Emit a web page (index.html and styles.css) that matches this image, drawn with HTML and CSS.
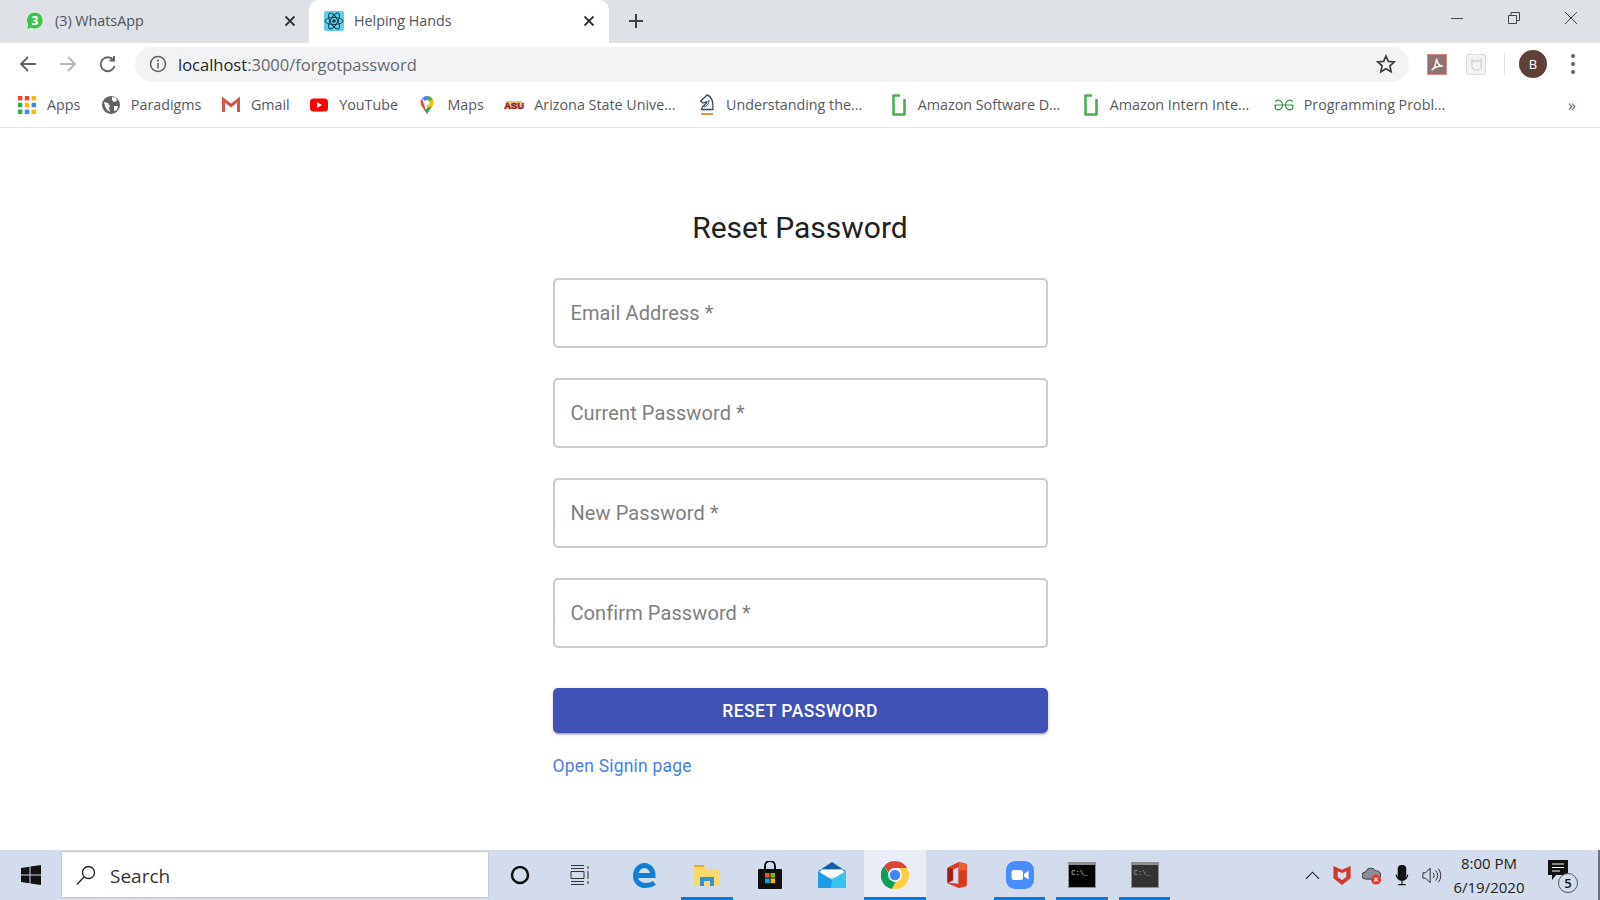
FILE: index.html
```html
<!DOCTYPE html>
<html lang="en">
  <head>
    <meta charset="UTF-8" />
    <title>Helping Hands</title>
    <link rel="stylesheet" href="styles.css">
  </head>
  <body>
    <!-- Tab strip -->
    <div class="tab-strip">
      <div class="tab">
        <svg class="favicon" viewBox="0 0 20 20"><path d="M10 1a8.600 8.600 0 0 0-7.400 13L1.500 18.500 6 17.400A8.600 8.600 0 1 0 10 1z" fill="#3fc251" stroke="#e4f5e6"/><text x="10" y="14" class="wa-count">3</text></svg>
        <span class="tab-title">(3) WhatsApp</span>
        <svg class="tab-close" viewBox="0 0 12 12"><path d="M1.500 1.500l9 9M10.500 1.500l-9 9"/></svg>
      </div>
      <div class="tab tab-active">
        <svg class="favicon" viewBox="0 0 20 20"><rect width="20" height="20" rx="2" fill="#61d0ec"/><g fill="none" stroke="#1d3d4c" stroke-width="1"><ellipse cx="10" cy="10" rx="9" ry="3.600"/><ellipse cx="10" cy="10" rx="9" ry="3.600" transform="rotate(60 10 10)"/><ellipse cx="10" cy="10" rx="9" ry="3.600" transform="rotate(120 10 10)"/></g><circle cx="10" cy="10" r="1.800" fill="#1d3d4c"/></svg>
        <span class="tab-title">Helping Hands</span>
        <svg class="tab-close" viewBox="0 0 12 12"><path d="M1.500 1.500l9 9M10.500 1.500l-9 9"/></svg>
      </div>
      <svg class="new-tab" viewBox="0 0 14 14"><path d="M7 0v14M0 7h14"/></svg>
      <div class="window-controls">
        <svg viewBox="0 0 12 12"><path d="M0 6.500h12"/></svg>
        <svg viewBox="0 0 12 12"><path d="M.5 3.500h8v8h-8zM3 3.500V.5h8.500v8h-3"/></svg>
        <svg viewBox="0 0 12 12"><path d="M0 0l12 12M12 0L0 12"/></svg>
      </div>
    </div>

    <!-- Address bar -->
    <div class="toolbar">
      <svg class="nav-icon" viewBox="0 0 18 18"><path d="M17 9H2M9 2L2 9l7 7"/></svg>
      <svg class="nav-icon nav-disabled" viewBox="0 0 18 18"><path d="M1 9h15M9 2l7 7-7 7"/></svg>
      <svg class="nav-icon" viewBox="0 0 18 18"><path d="M15.500 11a7 7 0 1 1-1.300-6.200M15 1v4.500h-4.500"/></svg>
      <div class="omnibox">
        <svg class="info-icon" viewBox="0 0 18 18"><circle cx="9" cy="9" r="7.500"/><path d="M9 8v5.500M9 4.500v2"/></svg>
        <span class="url"><span class="url-host">localhost</span>:3000/forgotpassword</span>
        <svg class="star-icon" viewBox="0 0 20 20"><path d="M10 2l2.400 5.400 5.800.6-4.300 3.900 1.200 5.800L10 14.700l-5.100 3 1.200-5.800L1.800 8l5.800-.6z"/></svg>
      </div>
      <div class="ext ext-pdf">
        <svg viewBox="0 0 20 20"><path d="M4 17c3-2 5-7 5.500-13 .5 5 3 8 7 8.500-5-.5-9 1-12.500 4.500z" fill="none" stroke="#fff" stroke-width="1.400"/></svg>
      </div>
      <div class="ext ext-pocket">
        <svg viewBox="0 0 14 14"><path d="M2 2l3 1.500h4L12 2v6a5 5 0 0 1-10 0z" fill="none" stroke="#cfd3d6" stroke-width="1.500"/></svg>
      </div>
      <div class="toolbar-divider"></div>
      <div class="avatar">B</div>
      <div class="kebab"><i></i><i></i><i></i></div>
    </div>

    <!-- Bookmarks -->
    <div class="bookmarks">
      <div class="bookmark bm-apps">
        <svg class="bm-icon" viewBox="0 0 18 18">
          <rect x="0" y="0" width="4.400" height="4.400" fill="#ea4335"/><rect x="6.800" y="0" width="4.400" height="4.400" fill="#ea4335"/><rect x="13.600" y="0" width="4.400" height="4.400" fill="#fbbc05"/>
          <rect x="0" y="6.800" width="4.400" height="4.400" fill="#34a853"/><rect x="6.800" y="6.800" width="4.400" height="4.400" fill="#fbbc05"/><rect x="13.600" y="6.800" width="4.400" height="4.400" fill="#4285f4"/>
          <rect x="0" y="13.600" width="4.400" height="4.400" fill="#34a853"/><rect x="6.800" y="13.600" width="4.400" height="4.400" fill="#4285f4"/><rect x="13.600" y="13.600" width="4.400" height="4.400" fill="#fbbc05"/>
        </svg>
        <span>Apps</span>
      </div>
      <div class="bookmark">
        <svg class="bm-icon" viewBox="0 0 18 18"><circle cx="9" cy="9" r="9" fill="#5f6368"/><path d="M2 6l4 1 2 3-1 2 1 4-3-2-2-4zM10 1l4 1 1 3-3 1-2-2zM12 10l4 0-1 4-3 1z" fill="#fff"/></svg>
        <span>Paradigms</span>
      </div>
      <div class="bookmark">
        <svg class="bm-icon" viewBox="0 0 18 18"><path d="M1.500 16V3.500L9 9.500l7.500-6V16" fill="none" stroke="#d0574d" stroke-width="3"/></svg>
        <span>Gmail</span>
      </div>
      <div class="bookmark">
        <svg class="bm-icon" viewBox="0 0 18 18"><rect y="2.500" width="18" height="13" rx="3.500" fill="#f00"/><path d="M7 6v6l5-3z" fill="#fff"/></svg>
        <span>YouTube</span>
      </div>
      <div class="bookmark">
        <svg class="bm-icon" viewBox="0 0 18 18"><path d="M9 0a6.500 6.500 0 0 1 6.500 6.500c0 1.300-.5 2.400-1.200 3.400L9 18z" fill="#fbbc04"/><path d="M9 0a6.500 6.500 0 0 0-5 2.400l5 4z" fill="#4285f4"/><path d="M9 0a6.500 6.500 0 0 1 5.600 3.200L9 6.500z" fill="#4caf50"/><path d="M4 2.400a6.500 6.500 0 0 0-.3 7.500L9 18z" fill="#ea4335"/><path d="M14.300 9.900L9 18 6.500 13.800z" fill="#34a853"/><circle cx="9" cy="6.500" r="2.500" fill="#fff"/></svg>
        <span>Maps</span>
      </div>
      <div class="bookmark bm-tight">
        <svg class="bm-icon bm-icon-wide" viewBox="0 0 20 12"><path d="M2 2h16v8H2z" fill="#f2c27a"/><text x="10" y="10" class="asu-logo">ASU</text></svg>
        <span>Arizona State Unive...</span>
      </div>
      <div class="bookmark bm-tight bm-understanding">
        <svg class="bm-icon bm-icon-knight" viewBox="0 0 18 22"><path d="M9 1c4 1 6.500 5 6 14.500H3.500c0-3.500 4.500-4.500 5.500-8L5 9 2.500 7 7 3z" fill="none" stroke="#33485f" stroke-width="1.300" stroke-linejoin="round"/><path d="M6 13c3-1 5-3 5-7" fill="none" stroke="#33485f"/><path d="M3 20h12" stroke="#e08a2b" stroke-width="1.800"/></svg>
        <span>Understanding the...</span>
      </div>
      <div class="bookmark bm-amazon-sd">
        <svg class="bm-icon bm-icon-narrow" viewBox="0 0 14 22"><path d="M8 1.500H1.500v19h11V5" fill="none" stroke="#4caf50" stroke-width="2.600" stroke-linejoin="round"/></svg>
        <span>Amazon Software D...</span>
      </div>
      <div class="bookmark bm-amazon-intern">
        <svg class="bm-icon bm-icon-narrow" viewBox="0 0 14 22"><path d="M8 1.500H1.500v19h11V5" fill="none" stroke="#4caf50" stroke-width="2.600" stroke-linejoin="round"/></svg>
        <span>Amazon Intern Inte...</span>
      </div>
      <div class="bookmark bm-tight bm-gfg">
        <svg class="bm-icon bm-icon-wide" viewBox="0 0 20 12"><path d="M18.800 2.600A4.300 4.800 0 1 0 18.800 9.400V6H1.200V9.400A4.300 4.800 0 1 0 1.200 2.600" fill="none" stroke="#2f8d46" stroke-width="1.200"/></svg>
        <span>Programming Probl...</span>
      </div>
      <span class="bm-more">»</span>
    </div>

    <!-- Page content -->
    <main class="page">
      <form class="reset-form">
        <h1>Reset Password</h1>
        <input class="field" type="text" placeholder="Email Address *" />
        <input class="field" type="text" placeholder="Current Password *" />
        <input class="field" type="text" placeholder="New Password *" />
        <input class="field" type="text" placeholder="Confirm Password *" />
        <button class="submit-btn" type="button">Reset Password</button>
        <a class="signin-link" href="#">Open Signin page</a>
      </form>
    </main>

    <!-- Windows taskbar -->
    <div class="taskbar">
      <div class="start-btn">
        <svg viewBox="0 0 20 20"><path d="M0 3l8.500-1.200v7.700H0zM9.500 1.600L20 0v9.500H9.500zM0 10.500h8.500v7.700L0 17zM9.500 10.500H20V20L9.500 18.400z" fill="#111"/></svg>
      </div>
      <div class="search-box">
        <svg viewBox="0 0 20 20"><circle cx="12.500" cy="7.500" r="6" fill="none" stroke="#222" stroke-width="1.300"/><path d="M8 12L1 19.500" stroke="#222" stroke-width="1.300"/></svg>
        <span>Search</span>
      </div>
      <div class="task-cell">
        <svg viewBox="0 0 20 20"><circle cx="10" cy="10" r="8" fill="none" stroke="#111" stroke-width="2.500"/></svg>
      </div>
      <div class="task-cell task-view">
        <svg viewBox="0 0 20 20"><path d="M1 .5h13M1 3.500h13M1 16.500h13M1 19.500h13M1 6.500h13v7H1zM18 1v3M18 6v8M18 16v3" fill="none" stroke="#333" stroke-width="1"/></svg>
      </div>
      <div class="task-cell">
        <svg class="task-icon" viewBox="0 0 26 28"><path d="M5 14.500h16c0-6-4-10-8.500-10C7.500 4.500 3.500 9 3.500 15c0 6.500 5 9.500 10.500 9.500 3 0 6-.8 8.500-2.500" fill="none" stroke="#0f7fd7" stroke-width="5"/></svg>
      </div>
      <div class="task-cell task-open">
        <svg class="task-icon" viewBox="0 0 26 24"><path d="M0 3a1 1 0 0 1 1-1h8l2 2H0z" fill="#e3a92a"/><path d="M0 4h11l2 2h13v17H0z" fill="#fbd96a"/><path d="M6 14h14v9h-4v-5h-6v5H6z" fill="#3a8fd0"/></svg>
      </div>
      <div class="task-cell">
        <svg class="task-icon" viewBox="0 0 26 28"><rect x="1" y="8" width="24" height="20" rx="1" fill="#111"/><path d="M8 10V5a5 5 0 0 1 10 0v5" fill="none" stroke="#111" stroke-width="2"/><rect x="8" y="12" width="4.600" height="4.600" fill="#f25022"/><rect x="13.500" y="12" width="4.600" height="4.600" fill="#7fba00"/><rect x="8" y="17.500" width="4.600" height="4.600" fill="#00a4ef"/><rect x="13.500" y="17.500" width="4.600" height="4.600" fill="#ffb900"/></svg>
      </div>
      <div class="task-cell">
        <svg class="task-icon task-icon-lg" viewBox="0 0 30 28"><path d="M0 10L15 0l15 10z" fill="#0f5ea8"/><path d="M3 8h24v8H3z" fill="#fff"/><path d="M0 10l15 9 15-9v18H0z" fill="#1d9be6"/><path d="M15 19l15-9v18H14z" fill="#36c3f2"/></svg>
      </div>
      <div class="task-cell task-active">
        <svg class="task-icon task-icon-lg" viewBox="0 0 28 28"><path d="M14 0a14 14 0 0 1 12.100 7H14a7 7 0 0 0-6.500 4.400L3.200 5A14 14 0 0 1 14 0z" fill="#db4437"/><path d="M3.200 5l6 10.500a6.500 6.500 0 0 0 5.500 5.500L11 28A14 14 0 0 1 3.200 5z" fill="#0f9d58"/><path d="M26.100 7A14 14 0 0 1 11 27.700L18 16a7 7 0 0 0 .5-9z" fill="#ffcd40"/><circle cx="14" cy="14" r="6.800" fill="#fff"/><circle cx="14" cy="14" r="5.300" fill="#4285f4"/></svg>
      </div>
      <div class="task-cell">
        <svg class="task-icon" viewBox="0 0 22 30"><path d="M1 7.500L13 1.500 21 3.500v23L13 28.500 1 23.500l12 1.500V6L6.500 8.500v12L1 23z" fill="#d8391f" stroke="#d8391f" stroke-linejoin="round"/><path d="M13 1.500l8 2V10h-8z" fill="#e8622a"/><path d="M1 7.500L6.500 8.500V20.500L1 23z" fill="#a31c1c"/></svg>
      </div>
      <div class="task-cell task-open">
        <svg class="task-icon task-icon-lg" viewBox="0 0 28 28"><rect width="28" height="28" rx="9" fill="#4a8cff"/><rect x="5.500" y="9" width="11.500" height="10" rx="2.500" fill="#fff"/><path d="M18 13l4.500-3.500v9L18 15.500z" fill="#fff"/></svg>
      </div>
      <div class="task-cell task-open">
        <div class="cmd-window"><span>C:\_</span></div>
      </div>
      <div class="task-cell task-open">
        <div class="cmd-window cmd-grey"><span>C:\_</span></div>
      </div>

      <div class="tray">
        <svg class="tray-icon" viewBox="0 0 16 16"><path d="M1 11.500L8 4.500l7 7" fill="none" stroke="#222" stroke-width="1.200"/></svg>
        <svg class="tray-icon tray-icon-lg" viewBox="0 0 20 22"><path d="M1 1l9 4 9-4v13l-9 7-9-7z" fill="#cf3a2f"/><path d="M5.500 6.500l4.500 2 4.500-2v6L10 16l-4.500-3.500z" fill="#d3dcec"/></svg>
        <svg class="tray-icon tray-icon-lg" viewBox="0 0 22 22"><path d="M4 15a4 4 0 0 1 0-8 6 6 0 0 1 11-1 4.500 4.500 0 0 1 2 9z" fill="#8c9096" stroke="#333"/><circle cx="15.500" cy="15.500" r="5.500" fill="#e03c31"/><path d="M13.500 13.500l4 4M17.500 13.500l-4 4" stroke="#fff" stroke-width="1.200"/></svg>
        <svg class="tray-icon tray-icon-lg" viewBox="0 0 14 22"><rect x="2.500" y="0" width="9" height="16" rx="4" fill="#111"/><path d="M1 10a6 6 0 0 0 12 0M7 16v4M3 20.500h8" fill="none" stroke="#111" stroke-width="1.200"/></svg>
        <svg class="tray-icon tray-icon-lg" viewBox="0 0 22 20"><path d="M1 7h3l5-5v16l-5-5H1zM12 7a4 4 0 0 1 0 6M15 4.500a8 8 0 0 1 0 11M18 2.500a12 12 0 0 1 0 15" fill="none" stroke="#333" stroke-width="1.100"/></svg>
      </div>
      <div class="clock">
        <div>8:00 PM</div>
        <div>6/19/2020</div>
      </div>
      <div class="notify">
        <svg viewBox="0 0 20 22"><path d="M0 0h20v15H8l-4 5v-5H0z" fill="#111"/><path d="M4 4h12M4 7.500h12M4 11h8" stroke="#fff" stroke-width="1.200"/></svg>
        <span class="notify-count">5</span>
      </div>
      <div class="show-desktop"></div>
    </div>
  </body>
</html>
```

FILE: styles.css
```css
/* General Styles */
* {
  box-sizing: border-box;
}
body {
  margin: 0;
  height: 900px;
  overflow: hidden;
  display: flex;
  flex-direction: column;
  background: #fff;
  font-family: "Open Sans", "Noto Sans", sans-serif;
  color: #3c4043;
}

/* Tab strip */
.tab-strip {
  height: 43px;
  flex: none;
  display: flex;
  align-items: center;
  background: #dee1e6;
}
.tab {
  width: 309px;
  height: 43px;
  flex: none;
  display: flex;
  align-items: center;
  padding: 0 13px 2px 25px;
}
.tab-active {
  width: 300px;
  padding: 0 14px 2px 15px;
  background: #fff;
  border-radius: 10px 10px 0 0;
  color: #45484c;
}
.favicon {
  width: 20px;
  height: 20px;
  flex: none;
}
.wa-count {
  font-size: 12px;
  font-weight: 700;
  fill: #fff;
  text-anchor: middle;
}
.tab-title {
  flex: 1;
  margin-left: 10px;
  font-size: 14.300px;
  color: #50545a;
}
.tab-close {
  width: 12px;
  height: 12px;
  fill: none;
  stroke: #333;
  stroke-width: 1.800;
}
.new-tab {
  width: 14px;
  height: 14px;
  margin-left: 20px;
  margin-bottom: 2px;
  fill: none;
  stroke: #3c4043;
  stroke-width: 2;
}
.window-controls {
  margin-left: auto;
  margin-right: 23px;
  margin-top: -7px;
  display: flex;
  gap: 45px;
}
.window-controls svg {
  width: 12px;
  height: 12px;
  fill: none;
  stroke: #444;
  stroke-width: 1;
}

/* Address bar */
.toolbar {
  height: 42px;
  flex: none;
  display: flex;
  align-items: center;
  padding: 0 0 0 19px;
}
.nav-icon {
  width: 18px;
  height: 18px;
  margin-right: 22px;
  fill: none;
  stroke: #5f6368;
  stroke-width: 1.900;
}
.nav-disabled {
  stroke: #b5b8bc;
}
.omnibox {
  width: 1274px;
  height: 35px;
  margin-left: -4px;
  display: flex;
  align-items: center;
  padding: 0 13px 0 14px;
  background: #f1f3f4;
  border-radius: 18px;
}
.info-icon {
  width: 18px;
  height: 18px;
  fill: none;
  stroke: #5f6368;
  stroke-width: 1.600;
}
.url {
  flex: 1;
  margin-left: 11px;
  font-size: 16.500px;
  color: #666a6f;
}
.url-host {
  color: #25282b;
}
.star-icon {
  width: 20px;
  height: 20px;
  fill: none;
  stroke: #3c4043;
  stroke-width: 1.700;
}
.ext {
  width: 20px;
  height: 21px;
  flex: none;
  display: flex;
  align-items: center;
  justify-content: center;
}
.ext-pdf {
  margin-left: 18px;
  background: #8f7272;
  border: 1px solid #d98a84;
}
.ext-pocket {
  margin-left: 19px;
  background: #f1f3f4;
  border: 1px solid #d9dcdf;
  border-radius: 2px;
}
.ext-pocket svg {
  width: 13px;
  height: 13px;
}
.toolbar-divider {
  width: 1px;
  height: 22px;
  margin-left: 18px;
  background: #dadce0;
}
.avatar {
  width: 28px;
  height: 28px;
  margin-left: 14px;
  flex: none;
  display: flex;
  align-items: center;
  justify-content: center;
  border-radius: 50%;
  background: #5d4037;
  color: #fff;
  font-size: 13px;
}
.kebab {
  margin-left: 24px;
  display: flex;
  flex-direction: column;
  gap: 4px;
}
.kebab i {
  width: 4px;
  height: 4px;
  border-radius: 50%;
  background: #5f6368;
}

/* Bookmarks */
.bookmarks {
  height: 43px;
  flex: none;
  display: flex;
  align-items: center;
  gap: 20.500px;
  padding: 0 0 3px 18px;
  border-bottom: 1px solid #e3e4e6;
  font-size: 14.300px;
  color: #55595e;
}
.bookmark {
  display: flex;
  align-items: center;
  gap: 11px;
  white-space: nowrap;
}
.bm-apps {
  margin-right: 1px;
}
.bm-tight {
  gap: 10px;
}
.bm-understanding {
  margin-left: 2px;
}
.bm-amazon-sd {
  margin-left: 9px;
  gap: 12px;
}
.bm-amazon-intern {
  margin-left: 3px;
  gap: 12px;
}
.bm-gfg {
  margin-left: 4px;
}
.bm-icon {
  width: 18px;
  height: 18px;
  flex: none;
}
.bm-icon-wide {
  width: 20px;
  height: 12px;
  overflow: visible;
}
.bm-icon-narrow {
  width: 14px;
  height: 22px;
}
.bm-icon-knight {
  height: 22px;
}
.asu-logo {
  font-family: "Liberation Sans", sans-serif;
  font-size: 9.500px;
  font-weight: 700;
  fill: #8c1d40;
  stroke: #8c1d40;
  stroke-width: 0.400;
  text-anchor: middle;
}
.bm-more {
  margin-left: auto;
  margin-right: 24px;
  font-size: 16px;
  color: #5f6368;
}

/* Page content */
.page {
  flex: 1;
  display: flex;
  justify-content: center;
}
.reset-form {
  width: 495px;
  display: flex;
  flex-direction: column;
}
.reset-form h1 {
  margin: 80px 0 30px;
  font: 400 30px/40px Roboto, sans-serif;
  text-align: center;
  color: #212121;
}
.field {
  height: 70px;
  margin-bottom: 30px;
  padding: 0 16px;
  border: 2px solid #cbcbcb;
  border-radius: 5px;
  font: 400 20px Roboto, sans-serif;
  letter-spacing: 0.100px;
  outline: none;
}
.field::placeholder {
  color: #808080;
  opacity: 1;
}
.submit-btn {
  height: 45px;
  margin-top: 10px;
  border: none;
  border-radius: 5px;
  background: #3f51b5;
  color: #fff;
  font: 500 17.500px Roboto, sans-serif;
  letter-spacing: 0.500px;
  text-transform: uppercase;
  box-shadow: 0 3px 1px -2px rgba(0, 0, 0, 0.2), 0 2px 2px 0 rgba(0, 0, 0, 0.14), 0 1px 5px 0 rgba(0, 0, 0, 0.12);
}
.signin-link {
  margin-top: 21px;
  font: 400 17.500px/24px Roboto, sans-serif;
  letter-spacing: 0.200px;
  color: #4a7fe0;
  text-decoration: none;
}

/* Taskbar */
.taskbar {
  height: 50px;
  flex: none;
  display: flex;
  align-items: stretch;
  background: #d3dcec;
}
.start-btn {
  width: 61px;
  flex: none;
  display: flex;
  align-items: center;
  justify-content: center;
}
.start-btn svg {
  width: 20px;
  height: 20px;
}
.search-box {
  width: 427.500px;
  flex: none;
  display: flex;
  align-items: center;
  margin: 1px 0 2px;
  padding: 2px 14px 0;
  gap: 14px;
  background: #fff;
  border: 1px solid #c6c9cf;
  font-size: 19px;
  color: #333;
}
.search-box svg {
  width: 20px;
  height: 20px;
  margin-top: -2px;
}
.task-cell {
  width: 62.500px;
  flex: none;
  display: flex;
  align-items: center;
  justify-content: center;
  padding-top: 2px;
  border-bottom: 3px solid transparent;
}
.task-cell svg {
  width: 20px;
  height: 20px;
}
.task-cell svg.task-icon {
  width: 26px;
  height: 28px;
}
.task-cell svg.task-icon-lg {
  width: 28px;
  height: 28px;
}
.task-view svg {
  margin-right: 4px;
}
.task-open {
  position: relative;
}
/* running app marker, shorter than the cell */
.task-open::after {
  content: "";
  position: absolute;
  left: 5px;
  right: 6px;
  bottom: -3px;
  height: 3px;
  background: #0a78d4;
}
.task-active {
  background: #e9eef6;
  border-bottom-color: #0a78d4;
}
.cmd-window {
  width: 28px;
  height: 26px;
  padding: 4px 0 0 2px;
  background: #000;
  border: 1px solid #8d8f92;
  border-top-width: 3px;
  color: #ddd;
  font: 7px/8px "Liberation Mono", monospace;
}
.cmd-grey {
  background: #333;
  color: #aaa;
}
.tray {
  margin-left: auto;
  display: flex;
  align-items: center;
}
.tray-icon {
  width: 15px;
  height: 15px;
  margin: 0 7px;
}
.tray-icon-lg {
  width: 20px;
  height: 21px;
  margin: 0 5px;
}
.clock {
  width: 88px;
  margin-left: -2px;
  display: flex;
  flex-direction: column;
  justify-content: center;
  gap: 4px;
  text-align: center;
  font-size: 15px;
  line-height: 20px;
  color: #222;
}
.notify {
  position: relative;
  width: 50px;
  margin-right: 15px;
  display: flex;
  align-items: center;
  justify-content: center;
}
.notify svg {
  width: 20px;
  height: 22px;
  margin-top: -8px;
}
.notify-count {
  position: absolute;
  left: 25px;
  top: 23px;
  width: 20px;
  height: 20px;
  display: flex;
  align-items: center;
  justify-content: center;
  border: 1px solid #555;
  border-radius: 50%;
  background: #d3dcec;
  font-size: 13px;
  font-weight: 600;
  color: #111;
}
.show-desktop {
  width: 2px;
  background: #6b7078;
}
```
